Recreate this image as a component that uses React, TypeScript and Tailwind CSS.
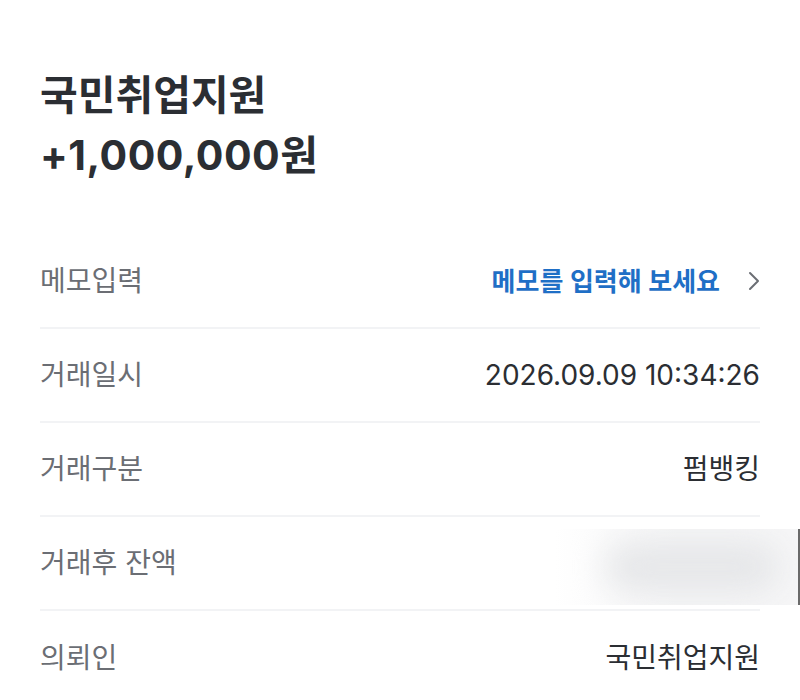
import React from "react";

const font = { fontFamily: 'Inter, "Noto Sans CJK KR", "Noto Sans", sans-serif' };

const Row = ({
  label,
  children,
  last,
}: {
  label: string;
  children?: React.ReactNode;
  last?: boolean;
}) => (
  <div
    className={`flex h-[94px] items-center justify-between ${
      last ? "" : "border-b-2 border-[#f2f3f5]"
    }`}
  >
    <span className="text-[28px] text-[#6b6e74]">{label}</span>
    {children}
  </div>
);

export default function App() {
  return (
    <div
      className="relative h-[700px] w-[800px] overflow-hidden bg-white pl-10 pr-10 pt-[65px]"
      style={font}
    >
      <div className="text-[41px] font-bold leading-[60px] text-[#2b2e33]">
        <div>국민취업지원</div>
        <div className="tracking-[0.5px]">+1,000,000원</div>
      </div>

      <div className="mt-[50px]">
        <Row label="메모입력">
          <div className="flex items-center gap-[28px]">
            <span className="text-[26px] font-semibold text-[#1f6fc6]">
              메모를 입력해 보세요
            </span>
            <svg width="12" height="20" viewBox="0 0 12 20" fill="none">
              <path
                d="M2 2l8 8-8 8"
                stroke="#6b6e74"
                strokeWidth="2"
                strokeLinecap="round"
                strokeLinejoin="round"
              />
            </svg>
          </div>
        </Row>
        <Row label="거래일시">
          <span className="text-[28px] text-[#2b2e33]">2026.09.09 10:34:26</span>
        </Row>
        <Row label="거래구분">
          <span className="text-[28px] text-[#2b2e33]">펌뱅킹</span>
        </Row>
        <Row label="거래후 잔액">
          <div className="relative -mr-10 mt-[8px] h-[76px] w-[245px] overflow-hidden bg-gradient-to-r from-white via-[#f6f6f7] to-[#f6f6f7]">
            <div className="absolute inset-y-[12px] left-[50px] right-[20px] rounded-full bg-[#e6e7e9] blur-[16px]" />
            <div className="absolute right-0 top-0 h-full w-[2px] bg-[#6a6a6a]" />
          </div>
        </Row>
        <Row label="의뢰인" last>
          <span className="text-[28px] text-[#2b2e33]">국민취업지원</span>
        </Row>
      </div>
    </div>
  );
}
